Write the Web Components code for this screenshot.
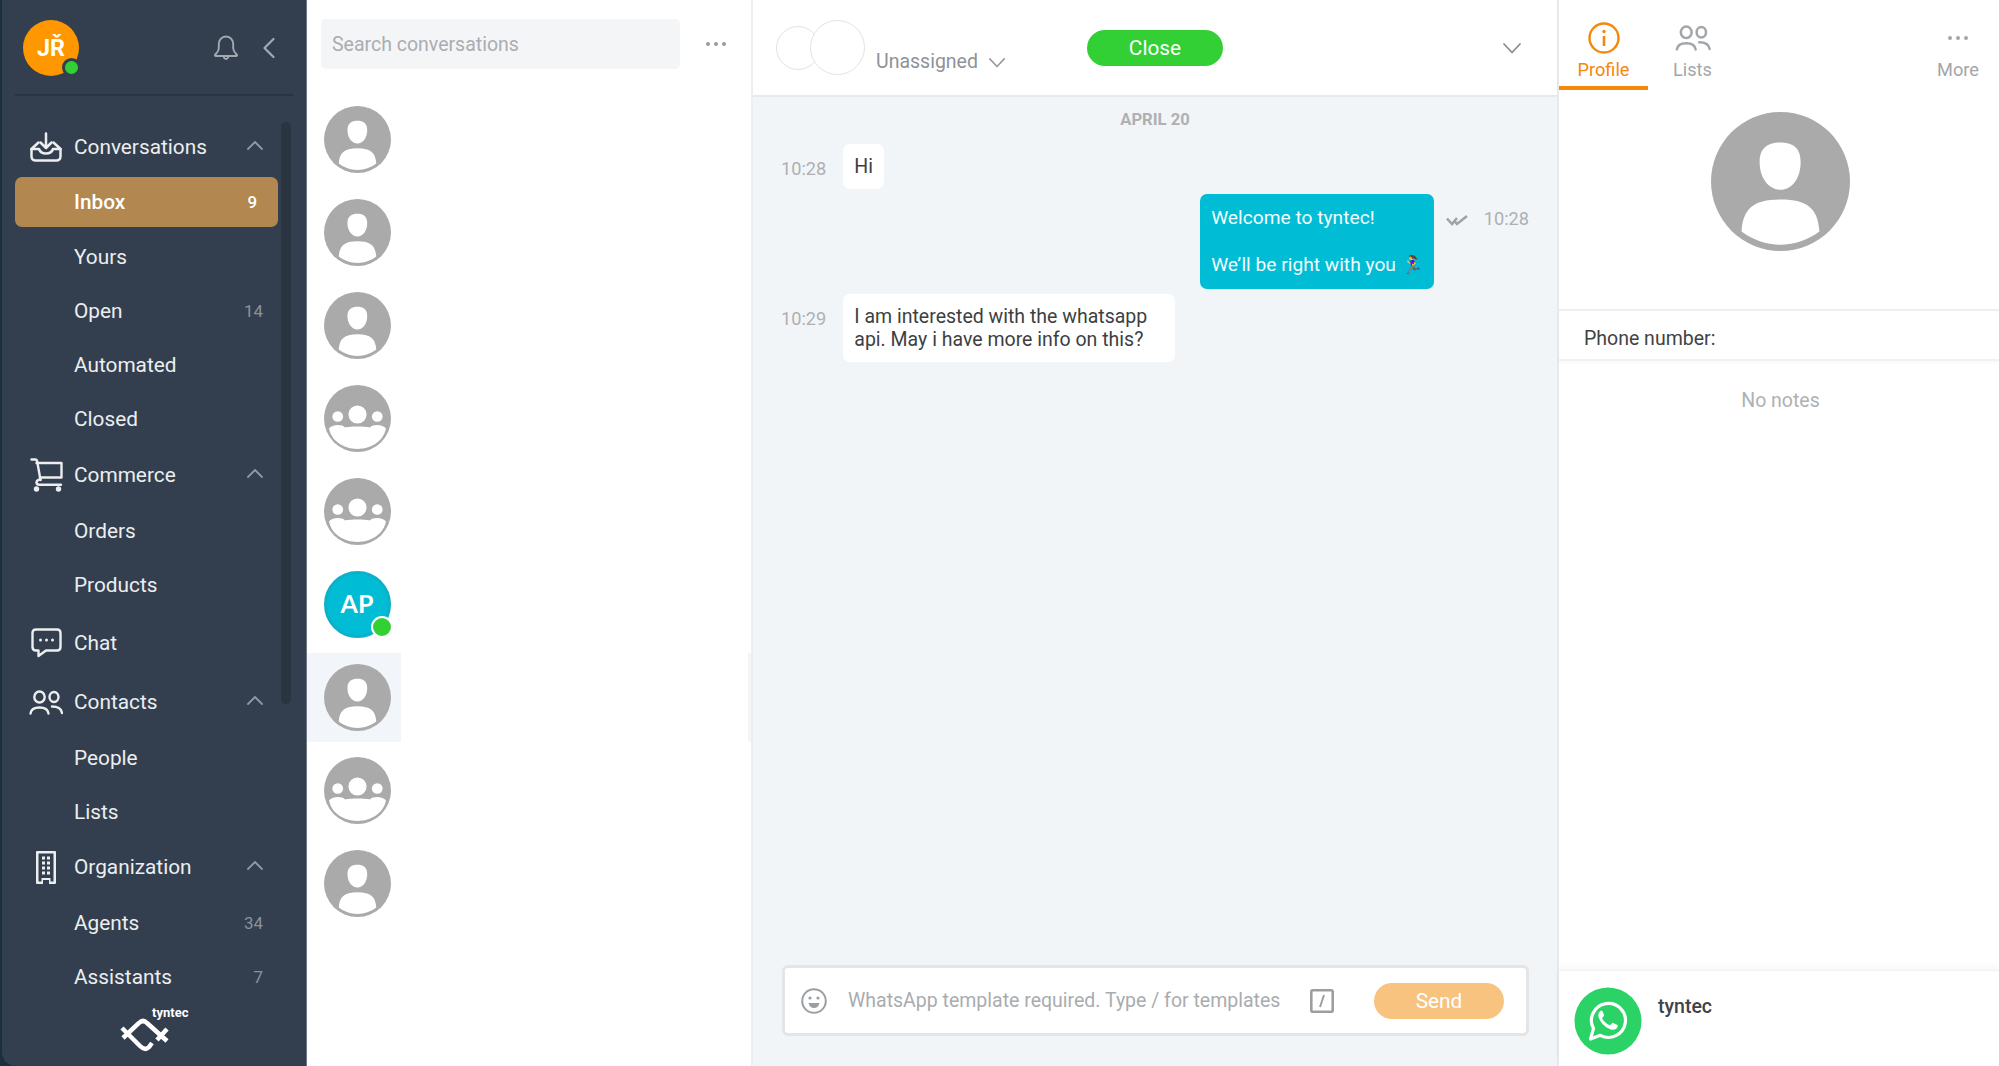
<!DOCTYPE html>
<html>
<head>
<meta charset="utf-8">
<title>tyntec conversations</title>
<style>
html, body { margin: 0; height: 100%; }
body { background: #1c2f3f; font-family: Roboto, "Liberation Sans", sans-serif; overflow: hidden; }
</style>
</head>
<body>
<inbox-app>
    <side-nav slot="nav">
        <nav-section label="Conversations" icon="inbox" top="24" open>
            <nav-item label="Inbox" count="9" active></nav-item>
            <nav-item label="Yours"></nav-item>
            <nav-item label="Open" count="14"></nav-item>
            <nav-item label="Automated"></nav-item>
            <nav-item label="Closed"></nav-item>
        </nav-section>
        <nav-section label="Commerce" icon="cart" top="2" open>
            <nav-item label="Orders"></nav-item>
            <nav-item label="Products"></nav-item>
        </nav-section>
        <nav-section label="Chat" icon="chat" top="4"></nav-section>
        <nav-section label="Contacts" icon="contacts" top="5" open>
            <nav-item label="People"></nav-item>
            <nav-item label="Lists"></nav-item>
        </nav-section>
        <nav-section label="Organization" icon="building" top="1" open>
            <nav-item label="Agents" count="34"></nav-item>
            <nav-item label="Assistants" count="7"></nav-item>
        </nav-section>
    </side-nav>
    <conv-list slot="list">
        <conv-row kind="person"></conv-row>
        <conv-row kind="person"></conv-row>
        <conv-row kind="person"></conv-row>
        <conv-row kind="group"></conv-row>
        <conv-row kind="group"></conv-row>
        <conv-row initials="AP"></conv-row>
        <conv-row kind="person" selected></conv-row>
        <conv-row kind="group"></conv-row>
        <conv-row kind="person"></conv-row>
    </conv-list>
    <chat-panel slot="chat">
        <chat-msg time="10:28">Hi</chat-msg>
        <chat-msg time="10:28" mine>Welcome to tyntec!<br><br>We’ll be right with you <span style="font-size:18px;line-height:0">🏃‍♀️</span></chat-msg>
        <chat-msg time="10:29">I am interested with the whatsapp api. May i have more info on this?</chat-msg>
    </chat-panel>
    <profile-panel slot="profile"></profile-panel>
</inbox-app>

<script>
const ICONS = {
    bell: '<svg viewBox="0 0 28 28" fill="none" stroke="currentColor" stroke-width="1.9" stroke-linejoin="round" stroke-linecap="round"><path d="M14 2.500c-4.600 0-7.200 3.600-7.200 7.800v4c0 3-2.100 4.600-3.600 6.300-.6.700-.2 1.400.7 1.400h20.200c.9 0 1.300-.7.700-1.400-1.500-1.700-3.600-3.300-3.600-6.300v-4c0-4.200-2.600-7.800-7.200-7.800z"/><path d="M11.800 23c.3 1.300 1.100 2 2.200 2s1.900-.7 2.200-2"/></svg>',
    back: '<svg viewBox="0 0 14 22" fill="none" stroke="currentColor" stroke-width="2.200" stroke-linecap="round" stroke-linejoin="round"><path d="M11.500 2 2.500 11l9 9"/></svg>',
    up: '<svg viewBox="0 0 18 10" fill="none" stroke="currentColor" stroke-width="1.800" stroke-linecap="round" stroke-linejoin="round"><path d="M2 9l7-7 7 7"/></svg>',
    down: '<svg viewBox="0 0 20 12" fill="none" stroke="currentColor" stroke-width="1.800" stroke-linecap="round" stroke-linejoin="round"><path d="M2 2l8 8.500L18 2"/></svg>',
    inbox: '<svg viewBox="0 0 32 30" fill="none" stroke="currentColor" stroke-width="2.500" stroke-linejoin="round" stroke-linecap="round"><path d="M16 1.500v14M10.500 10.500l5.500 5.500 5.500-5.500"/><path d="M8.500 10.500 1.500 17v7.500c0 2.600 2 4 4 4h21c2 0 4-1.400 4-4V17l-7-6.500"/><path d="M1.500 17H9c1 3 3.800 4.500 7 4.500s6-1.500 7-4.500h7.500"/></svg>',
    cart: '<svg viewBox="0 0 33 34" fill="none" stroke="currentColor" stroke-width="2.400" stroke-linejoin="round" stroke-linecap="round"><path d="M1.500 1.500h3.700c1.200 0 1.800.8 2 2L10.500 22"/><path d="M6.500 5H31.500v14.500H10"/><path d="M10.500 21.500c-2.700 0-4 1.300-4 3s1.300 2.300 3 2.300H31"/><circle cx="6.500" cy="31" r="2.700" fill="currentColor" stroke="none"/><circle cx="28.500" cy="31" r="2.700" fill="currentColor" stroke="none"/></svg>',
    chat: '<svg viewBox="0 0 31 30" fill="none" stroke="currentColor" stroke-width="2.400" stroke-linejoin="round"><path d="M5 1.500h21c2 0 3.500 1.500 3.500 3.500v14c0 2-1.500 3.500-3.500 3.500H15L7.500 28v-5.500H5c-2 0-3.500-1.500-3.500-3.500V5C1.500 3 3 1.500 5 1.500z"/><circle cx="9.500" cy="12" r="1.500" fill="currentColor" stroke="none"/><circle cx="15.500" cy="12" r="1.500" fill="currentColor" stroke="none"/><circle cx="21.500" cy="12" r="1.500" fill="currentColor" stroke="none"/></svg>',
    contacts: '<svg viewBox="0 0 34 25" fill="none" stroke="currentColor" stroke-width="2.400" stroke-linecap="round"><ellipse cx="10.500" cy="7" rx="5.200" ry="5.500"/><ellipse cx="25" cy="7" rx="4.500" ry="5"/><path d="M1.500 23.500c.5-4 4-6 9-6s8.500 2 9 6"/><path d="M23 16.500c5 0 9.300 2 10 6.500"/></svg>',
    building: '<svg viewBox="0 0 20 33" fill="currentColor"><path fill-rule="evenodd" d="M1 0h18a1 1 0 0 1 1 1v31a1 1 0 0 1-1 1H13v-4H7v4H1a1 1 0 0 1-1-1V1a1 1 0 0 1 1-1zm1.500 2.500v28h3v-3.500h9v3.500h3v-28z"/><path d="M6 5.500h3v3H6zM11 5.500h3v3h-3zM6 10.500h3v3H6zM11 10.500h3v3h-3zM6 15.500h3v3H6zM11 15.500h3v3h-3zM6 20.500h3v3H6zM11 20.500h3v3h-3z"/></svg>',
    logo: '<svg viewBox="0 0 52 36" fill="none" stroke="currentColor" stroke-width="4.500"><path d="M2 10 20 28Q25 33 29 29L32 25"/><path d="M3 20 19 5Q23 1 27 5L47 23"/><path d="M37 22 47 11"/></svg>',
    dots: '<svg viewBox="0 0 22 6" fill="currentColor"><circle cx="3" cy="3" r="2"/><circle cx="11" cy="3" r="2"/><circle cx="19" cy="3" r="2"/></svg>',
    info: '<svg viewBox="0 0 32 32" fill="none" stroke="currentColor" stroke-width="2.400"><circle cx="16" cy="16" r="14.500"/><path d="M16 14v10" stroke-width="2.600"/><circle cx="16" cy="9.500" r="1.700" fill="currentColor" stroke="none"/></svg>',
    ticks: '<svg viewBox="0 0 22 12" fill="none" stroke="currentColor" stroke-width="2.600"><path d="M1 4.500 6 10l5-6"/><path d="M8 6.500 11 10l10-8"/></svg>',
    smile: '<svg viewBox="0 0 26 26" fill="none" stroke="currentColor" stroke-width="2"><circle cx="13" cy="13" r="11.800"/><circle cx="9" cy="10" r="1.600" fill="currentColor" stroke="none"/><circle cx="17" cy="10" r="1.600" fill="currentColor" stroke="none"/><path d="M7.500 15h11c-.5 3-2.800 5-5.500 5s-5-2-5.500-5z" fill="currentColor" stroke="none"/></svg>',
    slash: '<svg viewBox="0 0 24 24" fill="none" stroke="currentColor" stroke-width="2.600"><rect x="1.300" y="1.300" width="21.400" height="21.400" rx="1.500"/><path d="M14 6l-4 12" stroke-width="2"/></svg>',
    person: '<svg viewBox="0 0 100 100"><circle cx="50" cy="50" r="50" fill="#aaaaaa"/><path fill="#fff" d="M50 22c8 0 14.500 3 14.500 14 0 12-6.500 20-14.500 20s-15-8-15-20c0-11 7-14 15-14zM22 86c1-16 8-23 28-23s27 7 28 23c-8 6-18 9.500-28 9.500S30 92 22 86z"/></svg>',
    group: '<svg viewBox="0 0 100 100"><circle cx="50" cy="50" r="50" fill="#aaaaaa"/><g fill="#fff"><circle cx="50" cy="44" r="13.500"/><circle cx="20.500" cy="47" r="8"/><circle cx="79.500" cy="47" r="8"/><path d="M7.500 65c4-6 19-7 24-1.500 5-2 32-2 37 0C73.500 58 88.500 59 92.500 65 89 84 70 95.500 50 95.500S11 84 7.500 65z"/></g></svg>',
    whatsapp: '<svg viewBox="0 0 68 68"><circle cx="34" cy="34" r="33.500" fill="#2bd366"/><path fill="none" stroke="#fff" stroke-width="3.200" stroke-linejoin="round" d="M16.500 52l3-10.500a17 17 0 1 1 6.800 6.800z"/><path fill="#fff" d="M28.500 23.500c-1-.2-2 .2-3 1.500-1.200 1.500-1.500 3.500-.8 5.500 1.800 5 6 9.500 11.500 11.800 2.500 1 4.600.6 6-.6 1.300-1.100 1.800-2.700 1.400-3.500-.3-.5-3.600-2-4.500-2.300-.7-.2-1 .1-2.200 1.700-.4.500-.8.600-1.500.3-3-1.200-5.300-3.300-7-6-.3-.5-.2-.9.200-1.300.8-1 1.600-1.700 1.400-2.500-.2-.8-1.300-3.800-1.800-4.100-.3-.2-1-.3-1.700-.3z"/></svg>'
};

// plain helper so every element can reuse one svg set
class AppIcon extends HTMLElement {
    connectedCallback() {
        const w = this.getAttribute('w') || 24;
        const h = this.getAttribute('h') || w;
        this.attachShadow({ mode: 'open' }).innerHTML = `
            <style>
            :host { display: inline-flex; flex: none; width: ${w}px; height: ${h}px; }
            svg { width: 100%; height: 100%; display: block; }
            </style>${ICONS[this.getAttribute('name')] || ''}`;
    }
}
customElements.define('app-icon', AppIcon);

class InboxApp extends HTMLElement {
    constructor() {
        super();
        this.attachShadow({ mode: 'open' }).innerHTML = `
            <style>
            :host { display: flex; width: 1999px; height: 1066px; }
            ::slotted([slot=nav]) { width: 305px; margin-left: 2px; }
            ::slotted([slot=list]) { width: 446px; }
            ::slotted([slot=chat]) { width: 804px; }
            ::slotted([slot=profile]) { flex: 1; }
            </style>
            <slot name="nav"></slot><slot name="list"></slot><slot name="chat"></slot><slot name="profile"></slot>`;
    }
}
customElements.define('inbox-app', InboxApp);

class SideNav extends HTMLElement {
    constructor() {
        super();
        this.attachShadow({ mode: 'open' }).innerHTML = `
            <style>
            :host { display: flex; flex-direction: column; height: 100%; box-sizing: border-box; background: #333f4e;
                border-right: 1px solid #6d7885; border-bottom-left-radius: 14px; color: #eceef0; }
            .top { display: flex; align-items: center; height: 96px; margin: 0 13px; box-sizing: border-box;
                border-bottom: 2px solid #2b3542; padding-left: 8px; flex: none; }
            .me { position: relative; width: 56px; height: 56px; border-radius: 50%; background: #ff9800; color: #fff;
                display: flex; align-items: center; justify-content: center; font-size: 23.4px; font-weight: 700; margin-top: 2px; }
            .me i { position: absolute; right: -2px; bottom: -1px; width: 13px; height: 13px; border-radius: 50%;
                background: #33d035; border: 3px solid #333f4e; }
            .bell { margin-left: auto; color: #a3a9b0; margin-top: 2px; }
            .back { margin: 2px 17px 0 22px; color: #a3a9b0; }
            .scroll { position: relative; flex: 1; min-height: 0; }
            .bar { position: absolute; left: 279px; top: 26px; width: 10px; height: 582px; border-radius: 5px; background: #2b3441; }
            .logo { flex: none; height: 63px; position: relative; }
            .logo span { position: absolute; left: 150px; top: 2px; font-size: 13px; font-weight: 700; color: #fff; }
            .logo app-icon { position: absolute; left: 118px; top: 15px; color: #fff; }
            </style>
            <div class="top">
                <div class="me">JŘ<i></i></div>
                <app-icon class="bell" name="bell" w="28"></app-icon>
                <app-icon class="back" name="back" w="14" h="22"></app-icon>
            </div>
            <div class="scroll"><div class="bar"></div><slot></slot></div>
            <div class="logo"><span>tyntec</span><app-icon name="logo" w="52" h="36"></app-icon></div>`;
    }
}
customElements.define('side-nav', SideNav);

class NavSection extends HTMLElement {
    connectedCallback() {
        const open = this.hasAttribute('open');
        this.attachShadow({ mode: 'open' }).innerHTML = `
            <style>
            :host { display: block; margin-top: ${this.getAttribute('top') || 0}px; }
            .head { display: flex; align-items: center; height: 54px; font-size: 20.8px; position: relative; padding-left: 72px; margin-bottom: 2px; }
            .ic { position: absolute; left: 27px; top: 0; bottom: 0; width: 34px; display: flex; align-items: center; justify-content: center; }
            .arrow { position: absolute; left: 244px; color: #91979e; top: 20px; }
            </style>
            <div class="head">
                <div class="ic"><app-icon name="${this.getAttribute('icon')}" ${this.iconSize()}></app-icon></div>
                <span>${this.getAttribute('label')}</span>
                ${open ? '<app-icon class="arrow" name="up" w="18" h="10"></app-icon>' : ''}
            </div>
            <slot></slot>`;
    }

    iconSize() {
        return {
            inbox: 'w="32" h="30"', cart: 'w="33" h="34"', chat: 'w="31" h="30"',
            contacts: 'w="34" h="25"', building: 'w="20" h="33"'
        }[this.getAttribute('icon')];
    }
}
customElements.define('nav-section', NavSection);

class NavItem extends HTMLElement {
    connectedCallback() {
        const count = this.getAttribute('count');
        this.attachShadow({ mode: 'open' }).innerHTML = `
            <style>
            :host { display: block; font-size: 20.8px; }
            .row { display: flex; align-items: center; height: 54px; padding: 0 15px 0 59px; margin: 0 28px 0 13px; box-sizing: border-box; }
            :host([active]) { margin: 3px 0 3px; }
            :host([active]) .row { height: 50px; background: #b28750; border-radius: 7px; font-weight: 500; color: #fff; }
            .n { margin-left: auto; font-size: 16.9px; color: #8b929b; }
            :host([active]) .n { color: #fff; font-weight: 500; padding-right: 6px; }
            </style>
            <div class="row"><span>${this.getAttribute('label')}</span>${count ? `<span class="n">${count}</span>` : ''}</div>`;
    }
}
customElements.define('nav-item', NavItem);

class ConvList extends HTMLElement {
    constructor() {
        super();
        this.attachShadow({ mode: 'open' }).innerHTML = `
            <style>
            :host { display: block; box-sizing: border-box; border-right: 2px solid #eceff2; background: #fff; height: 100%; }
            .search { display: flex; align-items: center; padding: 19px 0 0 14px; height: 50px; }
            .box { width: 359px; height: 50px; box-sizing: border-box; background: #f4f5f7; border-radius: 5px; padding: 1px 0 0 11px;
                display: flex; align-items: center; font-size: 19.5px; color: #a9adb2; }
            app-icon { margin-left: 25px; color: #9a9a9a; }
            .rows { padding-top: 26px; }
            </style>
            <div class="search"><div class="box">Search conversations</div><app-icon name="dots" w="22" h="6"></app-icon></div>
            <div class="rows"><slot></slot></div>`;
    }
}
customElements.define('conv-list', ConvList);

class ConvRow extends HTMLElement {
    connectedCallback() {
        const initials = this.getAttribute('initials');
        const pic = initials
            ? `<div class="ini"><span>${initials}</span><i></i></div>`
            : `<app-icon name="${this.getAttribute('kind')}" w="67"></app-icon>`;
        this.attachShadow({ mode: 'open' }).innerHTML = `
            <style>
            :host { display: block; height: 89px; margin-bottom: 4px; position: relative; }
            .hit { width: 94px; height: 100%; display: flex; align-items: center; padding-left: 17px; box-sizing: border-box; }
            :host([selected]) .hit { background: #f2f5f9; }
            :host([selected])::after { content: ''; position: absolute; right: 0; top: 0; bottom: 0; width: 3px; background: #f4f5f7; }
            .ini { position: relative; width: 67px; height: 67px; border-radius: 50%; box-sizing: border-box; background: #00bcd4;
                border: 3px solid #0cb0c8; color: #fff; font: 700 25px Lato, Roboto, sans-serif; display: flex; align-items: center; justify-content: center; }
            .ini span { margin-top: -3px; margin-left: -1px; }
            .ini i { position: absolute; right: -5px; bottom: -3px; width: 18px; height: 18px; border-radius: 50%; background: #33d035; border: 2px solid #fff; }
            </style>
            <div class="hit">${pic}</div>`;
    }
}
customElements.define('conv-row', ConvRow);

class ChatPanel extends HTMLElement {
    constructor() {
        super();
        this.attachShadow({ mode: 'open' }).innerHTML = `
            <style>
            :host { display: flex; flex-direction: column; height: 100%; background: #f2f5f8; }
            header { flex: none; height: 95px; box-sizing: content-box; background: #fff; border-bottom: 2px solid #e7e9ec; display: flex; align-items: center; padding-left: 23px; }
            .faces { display: flex; align-items: center; }
            .faces b { display: block; border-radius: 50%; background: #fff; border: 1px solid #e3e3e3; box-sizing: border-box; }
            .faces b:first-child { width: 44px; height: 44px; }
            .faces b:last-child { width: 55px; height: 55px; margin-left: -10px; }
            .who { display: flex; align-items: center; margin: 27px 0 0 11px; font-size: 19.5px; color: #8f9397; }
            .who app-icon { margin: 2px 0 0 10px; color: #999; }
            .close { margin-left: 81px; width: 136px; height: 36px; border-radius: 18px; background: #33d035; color: #fff; font-size: 20.8px;
                display: flex; align-items: center; justify-content: center; }
            .more { margin-left: auto; margin-right: 35px; color: #8a8d90; }
            .day { text-align: center; font-size: 16.6px; font-weight: 700; color: #aeb0b3; line-height: 20px; padding-top: 13px; }
            .msgs { flex: 1; padding: 14px 28px 0 28px; }
            .composer { flex: none; margin: 0 28px 30px 29px; height: 71px; box-sizing: border-box; background: #fff; border: 3px solid #e3e5e7;
                border-radius: 6px; display: flex; align-items: center; padding-left: 16px; }
            .composer span { margin-left: 21px; font-size: 19.5px; color: #a9acaf; width: 462px; white-space: nowrap; }
            .composer .s { color: #9c9fa2; }
            .composer .smile { color: #9c9fa2; }
            .send { margin-left: 40px; width: 130px; height: 36px; border-radius: 18px; background: #f8c27f; color: #fff; font-size: 20.8px;
                display: flex; align-items: center; justify-content: center; }
            </style>
            <header>
                <div class="faces"><b></b><b></b></div>
                <div class="who">Unassigned<app-icon name="down" w="18" h="11"></app-icon></div>
                <div class="close">Close</div>
                <app-icon class="more" name="down" w="20" h="12"></app-icon>
            </header>
            <div class="day">APRIL 20</div>
            <div class="msgs"><slot></slot></div>
            <div class="composer">
                <app-icon class="smile" name="smile" w="26"></app-icon>
                <span>WhatsApp template required. Type / for templates</span>
                <app-icon class="s" name="slash" w="24"></app-icon>
                <div class="send">Send</div>
            </div>`;
    }
}
customElements.define('chat-panel', ChatPanel);

class ChatMsg extends HTMLElement {
    connectedCallback() {
        const time = this.getAttribute('time');
        const t = `<time>${time}</time>`;
        this.attachShadow({ mode: 'open' }).innerHTML = `
            <style>
            :host { display: flex; align-items: flex-start; margin-bottom: 5px; font-size: 19.5px; line-height: 23.4px; color: #3c3f42; }
            :host([mine]) { justify-content: flex-end; font-size: 19.2px; }
            time { flex: none; font-size: 18.2px; color: #adb0b3; margin: 13px 17px 0 0; }
            .b { background: #fff; border-radius: 7px; padding: 11px; max-width: 310px; }
            :host([mine]) .b { background: #00bcd4; color: #f3fdff; padding: 12px 11px 12px; }
            :host([mine]) time { margin: 13px 0 0 16px; }
            app-icon { margin: 20px 0 0 12px; color: #9fa3a6; }
            </style>
            ${this.hasAttribute('mine')
                ? `<div class="b"><slot></slot></div><app-icon name="ticks" w="22" h="12"></app-icon>${t}`
                : `${t}<div class="b"><slot></slot></div>`}`;
    }
}
customElements.define('chat-msg', ChatMsg);

class TabItem extends HTMLElement {
    connectedCallback() {
        const icon = this.getAttribute('icon');
        const size = icon === 'dots' ? 'w="26" h="6"' : icon === 'info' ? 'w="32"' : 'w="36" h="26"';
        this.attachShadow({ mode: 'open' }).innerHTML = `
            <style>
            :host { display: flex; flex-direction: column; align-items: center; width: 89px; height: 90px; box-sizing: border-box;
                color: #a3a6a9; font-size: 18.2px; position: relative; }
            :host([active]) { color: #f5870a; border-bottom: 4px solid #f5870a; }
            .i { height: 38px; margin-top: 19px; display: flex; align-items: center; justify-content: center; }
            .l { margin-top: 1px; line-height: 24px; }
            </style>
            <div class="i"><app-icon name="${icon}" ${size}></app-icon></div>
            <div class="l">${this.getAttribute('label')}</div>`;
    }
}
customElements.define('tab-item', TabItem);

class ProfilePanel extends HTMLElement {
    constructor() {
        super();
        this.attachShadow({ mode: 'open' }).innerHTML = `
            <style>
            :host { display: flex; flex-direction: column; height: 100%; background: #fff; border-left: 2px solid #e7e9ec; box-sizing: border-box; }
            .tabs { display: flex; flex: none; height: 90px; padding-right: 0; }
            .tabs tab-item:nth-child(2) { width: 89px; }
            .tabs tab-item:last-child { margin-left: auto; width: 82px; }
            .pic { flex: none; height: 221px; display: flex; justify-content: center; padding: 22px 0 0 3px; box-sizing: border-box; border-bottom: 2px solid #eeeff1; }
            .phone { flex: none; height: 50px; display: flex; align-items: center; padding: 7px 0 0 25px; box-sizing: border-box; font-size: 19.5px; color: #3f4246;
                border-bottom: 2px solid #f0f1f3; box-shadow: 0 2px 4px rgba(0,0,0,.03); }
            .notes { flex: 1; text-align: center; font-size: 19.5px; color: #aeb1b4; padding: 28px 0 0 3px; line-height: 24px; }
            .foot { flex: none; height: 96px; box-shadow: 0 -3px 6px rgba(0,0,0,.04); border-top: 1px solid #f1f2f3; display: flex; padding: 16px 0 0 15px; box-sizing: border-box; }
            .foot b { margin: 8px 0 0 16px; font-size: 19.5px; font-weight: 500; color: #404347; line-height: 24px; }
            </style>
            <div class="tabs">
                <tab-item icon="info" label="Profile" active></tab-item>
                <tab-item icon="contacts" label="Lists"></tab-item>
                <tab-item icon="dots" label="More"></tab-item>
            </div>
            <div class="pic"><app-icon name="person" w="139"></app-icon></div>
            <div class="phone">Phone number:</div>
            <div class="notes">No notes</div>
            <div class="foot"><app-icon name="whatsapp" w="68"></app-icon><b>tyntec</b></div>`;
    }
}
customElements.define('profile-panel', ProfilePanel);
</script>
</body>
</html>
